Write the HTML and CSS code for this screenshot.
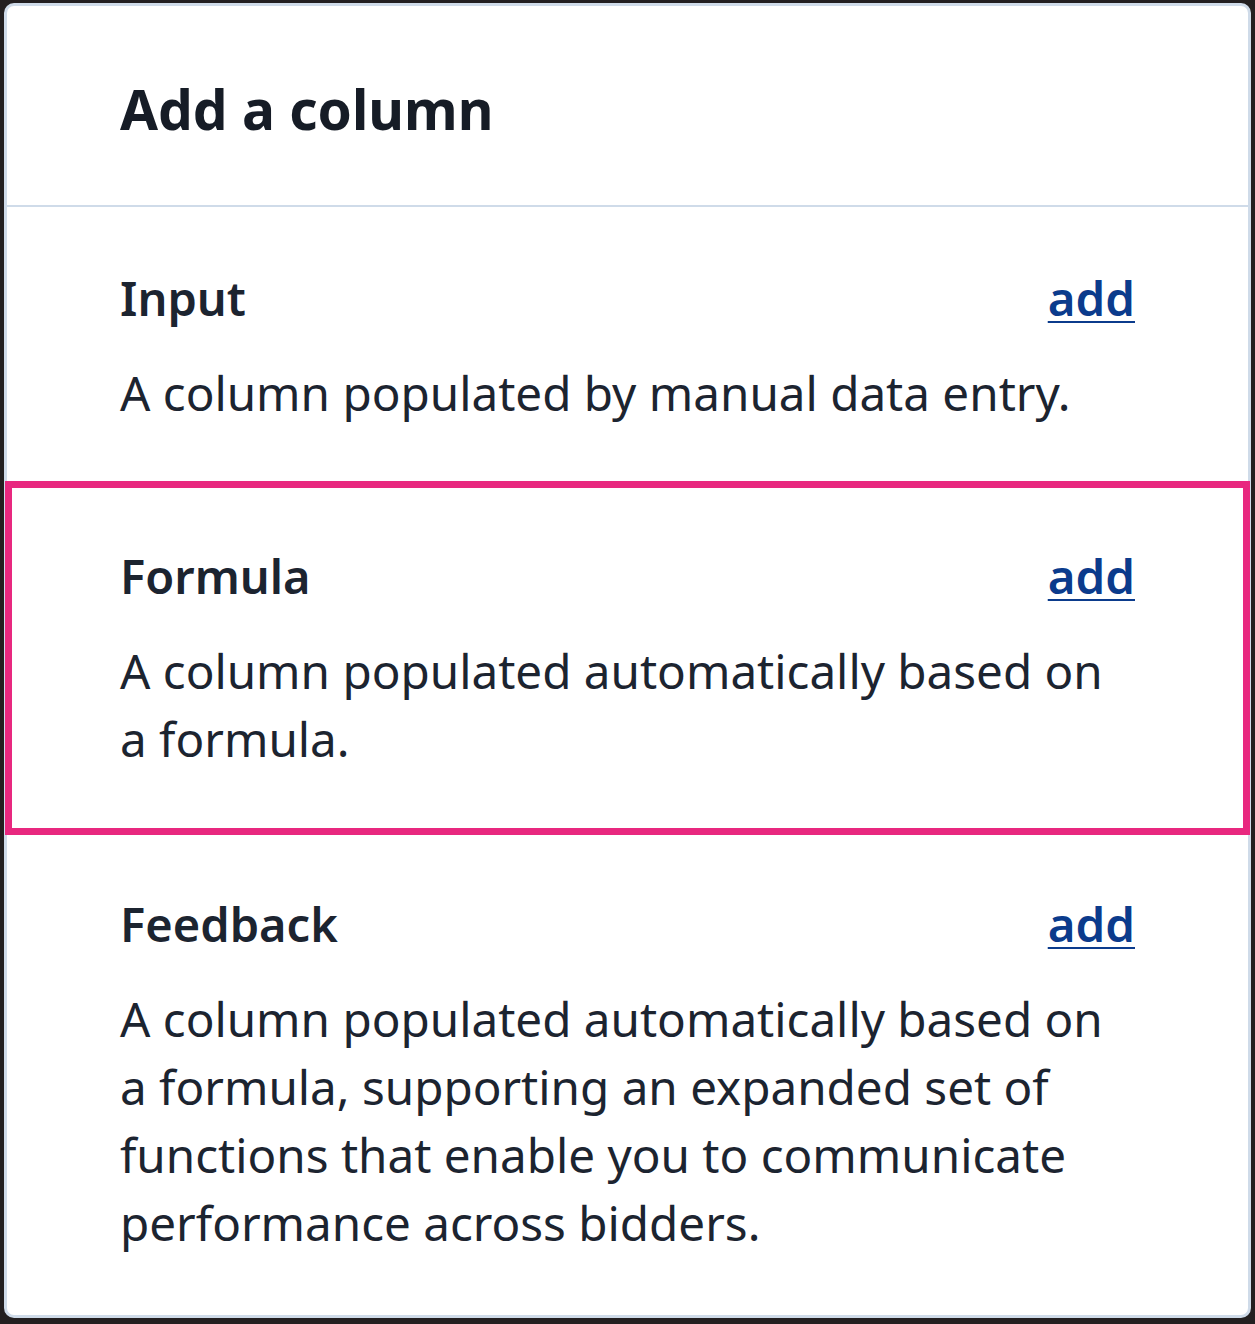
FILE: index.html
```html
<!DOCTYPE html>
<html lang="en">
<head>
    <meta charset="UTF-8">
    <meta name="viewport" content="width=device-width, initial-scale=1.0">
    <title>Add a column</title>
    <link rel="stylesheet" href="styles.css">
</head>
<body>
    <!-- Dialog panel -->
    <div class="panel">
        <header class="panel-header">
            <h1>Add a column</h1>
        </header>

        <!-- Column types -->
        <section class="column-type type-input">
            <div class="type-head">
                <h2>Input</h2>
                <a href="#" class="add-link">add</a>
            </div>
            <p>A column populated by manual data entry.</p>
        </section>

        <section class="column-type type-formula">
            <div class="type-head">
                <h2>Formula</h2>
                <a href="#" class="add-link">add</a>
            </div>
            <p>A column populated automatically based on a formula.</p>
        </section>

        <section class="column-type type-feedback">
            <div class="type-head">
                <h2>Feedback</h2>
                <a href="#" class="add-link">add</a>
            </div>
            <p>A column populated automatically based on a formula, supporting an expanded set of functions that enable you to communicate performance across bidders.</p>
        </section>
    </div>
</body>
</html>
```

FILE: styles.css
```css
* {
    margin: 0;
    padding: 0;
    box-sizing: border-box;
}

html,
body {
    height: 100%;
}

body {
    font-family: "Noto Sans", "Open Sans", sans-serif;
    background: #231f20;
    color: #1c2430;
    padding: 3px 4px 6px 4px;
}

.panel {
    height: 100%;
    background: #fff;
    border: 3px solid #cfdbe9;
    border-radius: 10px;
}

.panel-header {
    padding: 66px 113px 59px;
    border-bottom: 2px solid #cfdbe9;
}

.panel-header h1 {
    font-size: 55px;
    line-height: 74px;
    font-weight: 700;
    color: #161c26;
}

.column-type {
    padding: 61px 113px 54px;
}

.type-head {
    display: flex;
    justify-content: space-between;
    align-items: baseline;
    margin-bottom: 31px;
}

.type-head h2 {
    font-size: 47px;
    line-height: 60px;
    font-weight: 600;
}

.add-link {
    font-size: 47.5px;
    line-height: 60px;
    font-weight: 600;
    color: #0b3b8c;
    text-decoration: underline;
    text-decoration-thickness: 2px;
    text-underline-offset: 5px;
}

.column-type p {
    font-size: 47.6px;
    line-height: 68px;
}

.type-formula {
    margin: 0 -2px;
    border: 7px solid #e8287f;
    padding: 58px 108px 55px;
}

.type-feedback {
    padding-top: 59px;
}
```
